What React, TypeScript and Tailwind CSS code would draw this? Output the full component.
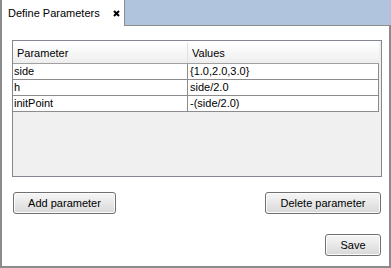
const rows = [
  { name: 'side', value: '{1.0,2.0,3.0}' },
  { name: 'h', value: 'side/2.0' },
  { name: 'initPoint', value: '-(side/2.0)' },
];

const btn =
  'flex h-[22px] items-center justify-center rounded-[3px] border border-[#707070] bg-gradient-to-b from-[#f6f6f6] via-[#e8e8e8] to-[#d8d8d8] text-[11px] text-black shadow-[inset_0_0_0_1px_#fcfcfc]';

export default function App() {
  return (
    <div className="flex h-[268px] w-[391px] flex-col border-l-2 border-[#8c8c8c] bg-white font-['Liberation_Sans',Arial,sans-serif] text-[11px] text-black">
      {/* Tab strip */}
      <div className="flex h-[26px] shrink-0">
        <div className="flex w-[123px] items-center border-r border-[#8c8c8c] bg-white pl-[6px]">
          <span className="leading-none">Define Parameters</span>
          <svg width="7" height="7" viewBox="0 0 7 7" className="ml-[13px] mt-[1px]">
            <path d="M1 1L6 6M6 1L1 6" stroke="#000" strokeWidth="2" />
          </svg>
        </div>
        <div className="flex-1 border-b border-[#8c8c8c] bg-[#b0c4de]" />
      </div>

      {/* Panel */}
      <div className="flex flex-1 flex-col border-b-2 border-r-2 border-[#8c8c8c] pl-[10px] pt-[14px]">
        <div className="flex h-[137px] w-[370px] flex-col border border-[#828790] bg-[#f0f0f0] pr-[2px]">
          <div className="flex h-[23px] shrink-0 border-b border-[#a0a0a0] bg-white pt-[2px]">
            <div className="flex w-[175px] items-center border-r border-[#e0e0e0] bg-gradient-to-b from-[#ffffff] to-[#eeeeee] pl-[4px]">
              Parameter
            </div>
            <div className="flex flex-1 items-center bg-gradient-to-b from-[#ffffff] to-[#eeeeee] pl-[4px]">
              Values
            </div>
          </div>
          {rows.map((r, i) => (
            <div key={i} className="flex h-[16px] shrink-0 border-b border-r border-[#8c8c8c] bg-white">
              <div className="flex w-[175px] items-center border-r border-[#8c8c8c] pl-[1px]">
                {r.name}
              </div>
              <div className="flex flex-1 items-center pl-[2px]">{r.value}</div>
            </div>
          ))}
        </div>

        <div className="mt-[15px] flex w-[369px] justify-between">
          <button className={`${btn} ml-[1px] w-[103px]`}>Add parameter</button>
          <button className={`${btn} w-[116px]`}>Delete parameter</button>
        </div>
        <div className="mt-[20px] flex w-[369px] justify-end">
          <button className={`${btn} w-[56px]`}>Save</button>
        </div>
      </div>
    </div>
  );
}
